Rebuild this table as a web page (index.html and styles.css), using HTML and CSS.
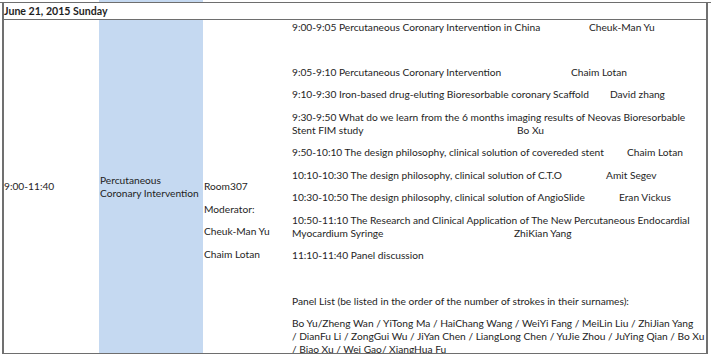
FILE: index.html
```html
<!DOCTYPE html>
<html>
<head>
<meta charset="utf-8">
<link rel="stylesheet" href="styles.css">
</head>
<body>
<div class="sheet">
  <div class="strip"><span></span><span class="blue"></span><span></span></div>
  <div class="frame">
    <div class="header">June 21, 2015 Sunday</div>
    <div class="body">
      <div class="c-time">9:00-11:40</div>
      <div class="c-topic blue">Percutaneous<br>Coronary Intervention</div>
      <div class="c-room">
        <p>Room307</p>
        <p>Moderator:</p>
        <p>Cheuk-Man Yu</p>
        <p>Chaim Lotan</p>
      </div>
      <div class="c-prog">
        <p class="talk"><span class="t" style="--w:297px">9:00-9:05 Percutaneous Coronary Intervention in China</span><span>Cheuk-Man Yu</span></p>
        <p class="empty"></p>
        <p class="talk"><span class="t" style="--w:279px">9:05-9:10 Percutaneous Coronary Intervention</span><span>Chaim Lotan</span></p>
        <p class="talk"><span class="t" style="--w:318px">9:10-9:30 Iron-based drug-eluting Bioresorbable coronary Scaffold</span><span>David zhang</span></p>
        <div class="para">
          <div class="line">9:30-9:50 What do we learn from the 6 months imaging results of Neovas Bioresorbable</div>
          <div class="talk"><span class="t" style="--w:225px">Stent FIM study</span><span>Bo Xu</span></div>
        </div>
        <p class="talk"><span class="t" style="--w:335px">9:50-10:10 The design philosophy, clinical solution of covereded stent</span><span>Chaim Lotan</span></p>
        <p class="talk"><span class="t" style="--w:314px">10:10-10:30 The design philosophy, clinical solution of C.T.O</span><span>Amit Segev</span></p>
        <p class="talk"><span class="t" style="--w:327px">10:30-10:50 The design philosophy, clinical solution of AngioSlide</span><span>Eran Vickus</span></p>
        <div class="para">
          <div class="line">10:50-11:10 The Research and Clinical Application of The New Percutaneous Endocardial</div>
          <div class="talk"><span class="t" style="--w:222px">Myocardium Syringe</span><span>ZhiKian Yang</span></div>
        </div>
        <p>11:10-11:40 Panel discussion</p>
        <p class="empty"></p>
        <p>Panel List (be listed in the order of the number of strokes in their surnames):</p>
        <div class="para">
          <div class="line">Bo Yu/Zheng Wan / YiTong Ma / HaiChang Wang / WeiYi Fang / MeiLin Liu / ZhiJian Yang</div>
          <div class="line">/ DianFu Li / ZongGui Wu / JiYan Chen / LiangLong Chen / YuJie Zhou / JuYing Qian / Bo Xu</div>
          <div class="line">/ Biao Xu / Wei Gao/ XiangHua Fu</div>
        </div>
      </div>
    </div>
  </div>
</div>
</body>
</html>
```
FILE: styles.css
```css
* { box-sizing: border-box; }
html, body { margin: 0; padding: 0; background: #fff; }
body {
  font-family: Lato, "Open Sans", sans-serif;
  font-size: 10.2px;
  color: #1e1e1e;
}
.sheet {
  width: 711px;
  height: 355px;
  overflow: hidden;
}
.strip {
  height: 2px;
  display: grid;
  grid-template-columns: 99px 104px 1fr;
  border-bottom: 1px solid #6e6e6e;
  box-sizing: content-box;
}
.blue { background: #c5d9f1; }
.frame {
  margin-left: 2px;
  width: 706px;
  border-left: 2px solid #707070;
  border-right: 2px solid #707070;
  border-bottom: 1px solid #6e6e6e;
}
.header {
  height: 17px;
  border-bottom: 1px solid #6e6e6e;
  font-weight: 700;
  font-size: 10.6px;
  line-height: 17px;
  white-space: nowrap;
}
.body {
  height: 333px;
  display: grid;
  grid-template-columns: 95px 104px 86px 1fr;
  grid-template-rows: 333px;
  overflow: hidden;
}
.c-time, .c-topic {
  display: flex;
  align-items: center;
  line-height: 12.7px;
}
.c-topic { padding-left: 1px; }
.c-room { padding-left: 1px; padding-top: 160px; }
.c-prog { padding-left: 3px; padding-top: 0.6px; white-space: nowrap; min-height: 0; overflow: hidden; }
p, .para { margin: 0 0 9.9px 0; line-height: 12.7px; }
p.empty { height: 12.7px; }
.talk { display: flex; }
.talk .t { width: var(--w); flex: none; }
```
